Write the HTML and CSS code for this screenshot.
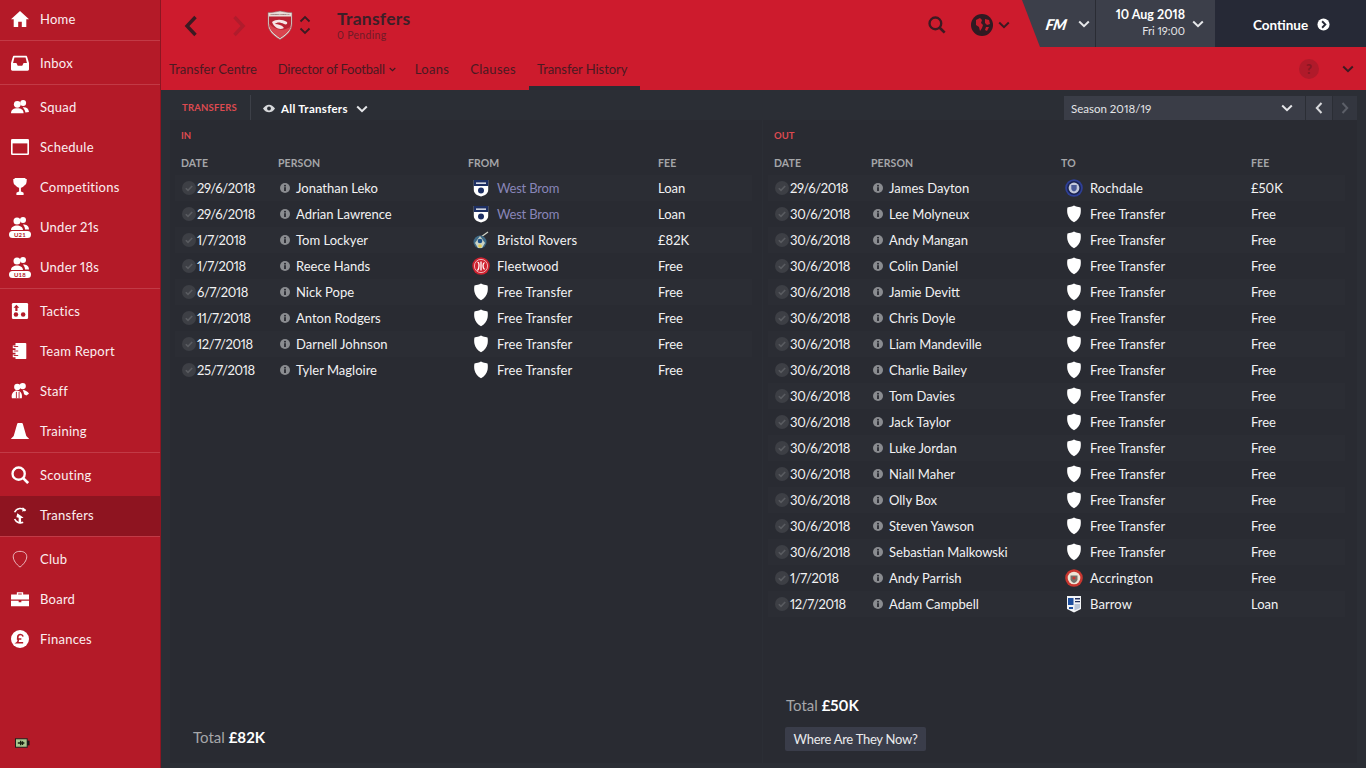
FILE: index.html
```html
<!DOCTYPE html>
<html lang="en">
<head>
<meta charset="utf-8">
<title>Transfers</title>
<link rel="stylesheet" href="styles.css">
</head>
<body>
<svg class="defs" width="0" height="0">
  <defs>
    <symbol id="check" viewBox="0 0 14 14"><circle cx="7" cy="7" r="7" fill="#3d3f45"/><path d="M3.800 7.200l2.200 2.200 4.200-4.400" fill="none" stroke="#5a5c61" stroke-width="1.600"/></symbol>
    <symbol id="info" viewBox="0 0 10 10"><circle cx="5" cy="5" r="5" fill="#8a8c90"/><rect x="4.100" y="4.200" width="1.800" height="3.800" fill="#282a31"/><rect x="4.100" y="1.900" width="1.800" height="1.600" fill="#282a31"/></symbol>
    <symbol id="shield" viewBox="0 0 16 18"><path d="M1.500 2.400C4 2.300 6 1.600 8 .6c2 1 4 1.700 6.500 1.800.5 2 .4 4.500 0 6.600-.8 3.700-3 6.500-6.500 8.200C4.500 15.500 2.300 12.700 1.500 9c-.4-2.100-.5-4.600 0-6.600z" fill="#fff"/></symbol>
    <symbol id="wba" viewBox="0 0 16 18"><path d="M.8 1h14.400v10c0 3.500-3.200 5.500-7.200 6.500C4 16.500.8 14.500.8 11z" fill="#fff"/><path d="M.8 1h14.400v6H.8z" fill="#1d2f63"/><path d="M3 3.500h10v1.300H3z" fill="#fff"/><circle cx="8" cy="11.500" r="3" fill="#1d2f63"/></symbol>
    <symbol id="bristol" viewBox="0 0 18 18"><path d="M16 1L9 6" stroke="#cfd3c8" stroke-width="1.300"/><circle cx="8" cy="11" r="6.500" fill="#3f6a86"/><path d="M3 12l5-7 5 7-3 5H6z" fill="#c9d2c4"/><circle cx="8" cy="10" r="2.300" fill="#1c4f86"/><circle cx="8" cy="15" r="1.800" fill="#e2c84e"/></symbol>
    <symbol id="fleetwood" viewBox="0 0 18 18"><circle cx="9" cy="9" r="8.700" fill="#cf2230"/><circle cx="9" cy="9" r="6.600" fill="none" stroke="#f4d5d5" stroke-width=".8"/><path d="M5.500 5.500c2-1 2 6 0 8M9 4.500v9M12.500 5.500c-2 1-2 5 0 7" fill="none" stroke="#fff" stroke-width="1.300"/></symbol>
    <symbol id="rochdale" viewBox="0 0 18 18"><circle cx="9" cy="9" r="8.800" fill="#2e3f96"/><circle cx="9" cy="9" r="7" fill="#1a2350"/><circle cx="9" cy="9" r="5.400" fill="#c2c8da"/><path d="M6.300 6h5.400v3.500c0 1.500-1.300 2.500-2.700 3-1.400-.5-2.700-1.500-2.700-3z" fill="#4a5a96"/></symbol>
    <symbol id="accrington" viewBox="0 0 18 18"><circle cx="9" cy="9" r="8.800" fill="#c9362f"/><circle cx="9" cy="9" r="6.300" fill="#eee5d6"/><path d="M5.500 6.500h7v4c0 1.600-1.700 2.800-3.500 3.500-1.800-.7-3.500-1.900-3.500-3.500z" fill="#75726b"/><circle cx="9" cy="9" r="1.600" fill="#c9362f"/></symbol>
    <symbol id="barrow" viewBox="0 0 16 18"><path d="M1 1h14v13l-7 3.500L1 14z" fill="#f2f4f6"/><path d="M2 3h5.500v7H2z" fill="#1e4f9e"/><path d="M8.500 9H14v4l-5.500 2.500z" fill="#b9c6d8"/><path d="M9 3h5v1.500H9zM9 6h5v1.200H9z" fill="#24305c"/><path d="M3 12h4v2H3z" fill="#1e4f9e"/></symbol>
    <symbol id="chev" viewBox="0 0 12 8"><path d="M1.200 1.500L6 6.200l4.800-4.700" fill="none" stroke="currentColor" stroke-width="2"/></symbol>
  </defs>
</svg>
<div class="app">
  <nav class="side">
    <div class="group first">
      <a class="item"><svg class="ico" viewBox="0 0 20 20"><path d="M10 1L0 10.200h3V19h5v-6h4v6h5v-8.800h3z" fill="#fff"/></svg><span>Home</span></a>
    </div>
    <div class="group">
      <a class="item"><svg class="ico" viewBox="0 0 20 20"><path d="M3.500 2h13c.8 0 1.200.5 1.500 1.200L20 10v7c0 1-.7 1.500-1.500 1.500h-17C.7 18.500 0 18 0 17v-7L2 3.200C2.300 2.500 2.700 2 3.500 2z" fill="#fff"/><path d="M3.800 4h12.400l1.500 6H14l-1.500 3h-5L6 10H2.300z" fill="#b41a28"/></svg><span>Inbox</span></a>
    </div>
    <div class="group">
      <a class="item"><svg class="ico" viewBox="0 0 20 20"><circle cx="7" cy="7" r="3.800" fill="#fff"/><circle cx="13.500" cy="5.500" r="3.300" fill="#fff"/><path d="M0 17c0-4 3-5.500 7-5.500s7 1.500 7 5.500z" fill="#fff"/><path d="M13 10.500c3.500-.5 6.500 1 7 5l-4 .5c-.3-2.500-1.500-4-3-5.500z" fill="#fff"/></svg><span>Squad</span></a>
      <a class="item"><svg class="ico" viewBox="0 0 20 20"><rect y="1" width="20" height="18" rx="1.500" fill="#fff"/><rect x="1.800" y="6" width="16.400" height="11.200" fill="#b41a28"/></svg><span>Schedule</span></a>
      <a class="item"><svg class="ico" viewBox="0 0 20 20"><path d="M4 0h12v1h1.500c0 4-.5 6.500-3 7.500-.8 1.200-2 2-3.500 2.300V15c1 .3 2 .8 3 1.500V19H6v-2.500c1-.7 2-1.200 3-1.500v-4.200c-1.500-.3-2.700-1.100-3.500-2.300C3 7.500 2.500 5 2.500 1H4z" fill="#fff"/></svg><span>Competitions</span></a>
      <a class="item"><svg class="ico wide" viewBox="0 0 22 22"><circle cx="8" cy="5" r="3.500" fill="#fff"/><circle cx="14" cy="4" r="3" fill="#fff"/><path d="M2 14c0-3 3-4.500 6-4.500s6 1.500 6 4.500zM14 8.500c3 0 6 1 6 5h-4c0-2-1-3.500-2-5z" fill="#fff"/><rect y="15" width="22" height="7" rx="3.500" fill="#fff"/><text x="11" y="20.700" class="u">U21</text></svg><span>Under 21s</span></a>
      <a class="item"><svg class="ico wide" viewBox="0 0 22 22"><circle cx="8" cy="5" r="3.500" fill="#fff"/><circle cx="14" cy="4" r="3" fill="#fff"/><path d="M2 14c0-3 3-4.500 6-4.500s6 1.500 6 4.500zM14 8.500c3 0 6 1 6 5h-4c0-2-1-3.500-2-5z" fill="#fff"/><rect y="15" width="22" height="7" rx="3.500" fill="#fff"/><text x="11" y="20.700" class="u">U18</text></svg><span>Under 18s</span></a>
    </div>
    <div class="group">
      <a class="item"><svg class="ico" viewBox="0 0 20 20"><rect x="1" y="1" width="18" height="18" rx="1.500" fill="#fff"/><path d="M6 3L2.800 6.500h2v3.500h2.400V6.500h2z" fill="#b41a28"/><circle cx="5.500" cy="14" r="2.500" fill="#b41a28"/><circle cx="13.500" cy="14" r="2.500" fill="#b41a28"/></svg><span>Tactics</span></a>
      <a class="item"><svg class="ico" viewBox="0 0 20 20"><path d="M5 1h11c.6 0 1 .4 1 1v16c0 .6-.4 1-1 1H5z" fill="#fff"/><path d="M2 4h5v3H2zM2 9h5v3H2zM2 14h5v3H2z" fill="#fff"/><path d="M3 5h5M3 10h5M3 15h5" stroke="#b41a28" stroke-width="1"/></svg><span>Team Report</span></a>
      <a class="item"><svg class="ico" viewBox="0 0 20 20"><circle cx="7" cy="5.500" r="3.500" fill="#fff"/><circle cx="13" cy="4.500" r="3.500" fill="#fff"/><path d="M1 18c-1-4 1-8 5-8.500 5 0 7 4 6 8.500zM13 9c3 0 6 2 7 4l-3 2-2.500-1.500c-.3-2-1-3.500-1.500-4.500z" fill="#fff"/><path d="M6 11v7M9 11v7" stroke="#b41a28" stroke-width="1"/></svg><span>Staff</span></a>
      <a class="item"><svg class="ico" viewBox="0 0 20 20"><path d="M8 1h4c.6 0 1 .4 1.100 1L17 15.500l3 3V19H0v-.5l3-3L6.900 2c.1-.6.5-1 1.100-1z" fill="#fff"/></svg><span>Training</span></a>
    </div>
    <div class="group plain">
      <a class="item"><svg class="ico" viewBox="0 0 20 20"><circle cx="8.500" cy="8.500" r="6.800" fill="none" stroke="#fff" stroke-width="2.600"/><path d="M13.500 13.500L19 19" stroke="#fff" stroke-width="3"/></svg><span>Scouting</span></a>
    </div>
    <div class="group transfer">
      <a class="item active"><svg class="ico" viewBox="0 0 20 20"><path d="M16 5.500A7 7 0 0 0 4 7M4 14.500a7 7 0 0 0 9.500 3.500" fill="none" stroke="#fff" stroke-width="1.800"/><path d="M13 1.500l4 3-4.500 2zM7 8l7 5-3 .5.500 5.500-3 .5V13L6 12.500z" fill="#fff"/></svg><span>Transfers</span></a>
    </div>
    <div class="group plain">
      <a class="item"><svg class="ico" viewBox="0 0 20 20"><path d="M10 1.500c4 0 7.500 1.800 7.500 6 0 4-3.500 8.500-7.500 11.500-4-3-7.500-7.500-7.500-11.500 0-4.200 3.500-6 7.500-6z" fill="none" stroke="#f2cdd1" stroke-width="1"/></svg><span>Club</span></a>
      <a class="item"><svg class="ico" viewBox="0 0 20 20"><path d="M6.500 5V2.500h7V5H20v5.500H0l.1-5.500zM8 5h4V4H8z" fill="#fff" fill-rule="evenodd"/><path d="M0 12h8.500v1.500h3V12H20v6H0z" fill="#fff"/></svg><span>Board</span></a>
      <a class="item"><svg class="ico" viewBox="0 0 20 20"><circle cx="10" cy="10" r="10" fill="#fff"/><path d="M13.500 7.200C13 5.800 12 5 10.500 5 8.500 5 7.500 6.300 7.500 8c0 2 .8 2.500.5 4-.2 1-.6 1.500-1.500 2.200h7M6.500 10h5" fill="none" stroke="#b41a28" stroke-width="1.800"/></svg><span>Finances</span></a>
    </div>
    <div class="battery"><svg class="batt" viewBox="0 0 16 10"><rect x="0.500" y="0.500" width="12.500" height="9" fill="#a9c78f" stroke="#1a1a1a"/><rect x="13" y="2.500" width="2.500" height="5" fill="#1a1a1a"/><path d="M3 5h7M6 2.500v5M8 3v4" stroke="#14200f" stroke-width="1.400"/></svg></div>
  </nav>

  <main class="main">
    <header class="head">
      <div class="top">
        <div class="nav-arrows">
          <svg class="arrow" viewBox="0 0 14 22"><path d="M11.500 2L3 11l8.500 9" fill="none" stroke="#3c1a22" stroke-width="3.400"/></svg>
          <svg class="arrow faded" viewBox="0 0 14 22"><path d="M2.500 2L11 11l-8.500 9" fill="none" stroke="#b01c2c" stroke-width="3.400"/></svg>
        </div>
        <svg class="crest" viewBox="0 0 26 30"><path d="M1 2.500C6 2.500 9 1.800 13 1c4 .8 7 1.500 12 1.500v11c0 7-5 12-12 16-7-4-12-9-12-16z" fill="#e9dcd8" stroke="#8a6a66" stroke-width=".6"/><path d="M2 6.500h22v7c0 6-5 10.500-11 14.400-6-3.900-11-8.400-11-14.400z" fill="#b92232"/><path d="M13 27.900c-6-3.900-11-8.400-11-14.400 6 7 15 8 22 3-1.400 4.700-5.900 8.200-11 11.400z" fill="#d9434e"/><path d="M5 12c4-3 10-3 15 0 1 2-1 3-3 2-4-2-7-2-9 0 3 0 7 1 9 4-4 2-9 1-12-6z" fill="#f6e6e6"/><text x="13" y="5.300" class="crest-t">MORECAMBE FC</text></svg>
        <div class="updown">
          <svg viewBox="0 0 12 8"><path d="M1.500 6.500L6 2l4.500 4.500" fill="none" stroke="#3c1a22" stroke-width="1.800"/></svg>
          <svg viewBox="0 0 12 8"><path d="M1.500 1.500L6 6l4.500-4.500" fill="none" stroke="#3c1a22" stroke-width="1.800"/></svg>
        </div>
        <div class="title">
          <h1>Transfers</h1>
          <p>0 Pending</p>
        </div>
        <svg class="search" viewBox="0 0 20 20"><circle cx="8.200" cy="8.200" r="6.500" fill="none" stroke="#3c1a22" stroke-width="2.600"/><path d="M13 13l5.500 5.500" stroke="#3c1a22" stroke-width="3"/></svg>
        <svg class="globe" viewBox="0 0 22 22"><circle cx="11" cy="11" r="11" fill="#301a22"/><path d="M5 6l4-2 2 2-1 3 2 2-1 3-2 3-1-4-3-2zM14 5l4 1 1 4-3 1-2-2zM15 13l3 0-2 4-2-1z" fill="#c41c2c"/></svg>
        <svg class="chev globe-chev"><use href="#chev"/></svg>
        <div class="fm">
          <span class="fm-logo">FM</span>
          <svg class="chev light"><use href="#chev"/></svg>
        </div>
        <div class="date">
          <div class="date-t"><b>10 Aug 2018</b><span>Fri 19:00</span></div>
          <svg class="chev light"><use href="#chev"/></svg>
        </div>
        <div class="continue">
          <span>Continue</span>
          <svg class="cont-ico" viewBox="0 0 14 14"><circle cx="7" cy="7" r="6.500" fill="#fff"/><path d="M5.500 3.500L9 7l-3.500 3.500" fill="none" stroke="#262936" stroke-width="2"/></svg>
        </div>
      </div>
      <div class="tabs">
        <a class="tab">Transfer Centre</a>
        <a class="tab drop">Director of Football <svg class="chev tiny"><use href="#chev"/></svg></a>
        <a class="tab wider">Loans</a>
        <a class="tab wider">Clauses</a>
        <a class="tab current">Transfer History</a>
        <span class="help">?</span>
        <svg class="chev tab-chev"><use href="#chev"/></svg>
      </div>
    </header>

    <div class="toolbar">
      <span class="crumb">TRANSFERS</span>
      <span class="filter">
        <svg class="eye" viewBox="0 0 14 10"><path d="M0 5c2-3 4.500-4.500 7-4.500S12 2 14 5c-2 3-4.500 4.500-7 4.500S2 8 0 5z" fill="#d8d9dc"/><circle cx="7" cy="5" r="2.200" fill="#2b2e35"/></svg>
        <b>All Transfers</b>
        <svg class="chev light"><use href="#chev"/></svg>
      </span>
      <div class="season">
        <span>Season 2018/19</span>
        <svg class="chev light"><use href="#chev"/></svg>
      </div>
      <span class="pager"><svg viewBox="0 0 8 12"><path d="M6.500 1L1.800 6l4.700 5" fill="none" stroke="#d8d9dc" stroke-width="2"/></svg></span>
      <span class="pager"><svg viewBox="0 0 8 12"><path d="M1.500 1l4.700 5-4.700 5" fill="none" stroke="#5c5f68" stroke-width="2"/></svg></span>
    </div>

    <div class="panels">
      <section class="panel">
        <h2>IN</h2>
        <div class="row heads"><span>DATE</span><span>PERSON</span><span>FROM</span><span>FEE</span></div>
        <div class="row"><span class="d"><svg class="ck"><use href="#check"/></svg>29/6/2018</span><span class="p"><svg class="in"><use href="#info"/></svg>Jonathan Leko</span><span class="c link"><svg class="bd"><use href="#wba"/></svg>West Brom</span><span>Loan</span></div>
        <div class="row"><span class="d"><svg class="ck"><use href="#check"/></svg>29/6/2018</span><span class="p"><svg class="in"><use href="#info"/></svg>Adrian Lawrence</span><span class="c link"><svg class="bd"><use href="#wba"/></svg>West Brom</span><span>Loan</span></div>
        <div class="row"><span class="d"><svg class="ck"><use href="#check"/></svg>1/7/2018</span><span class="p"><svg class="in"><use href="#info"/></svg>Tom Lockyer</span><span class="c"><svg class="bd"><use href="#bristol"/></svg>Bristol Rovers</span><span>£82K</span></div>
        <div class="row"><span class="d"><svg class="ck"><use href="#check"/></svg>1/7/2018</span><span class="p"><svg class="in"><use href="#info"/></svg>Reece Hands</span><span class="c"><svg class="bd"><use href="#fleetwood"/></svg>Fleetwood</span><span>Free</span></div>
        <div class="row"><span class="d"><svg class="ck"><use href="#check"/></svg>6/7/2018</span><span class="p"><svg class="in"><use href="#info"/></svg>Nick Pope</span><span class="c"><svg class="bd"><use href="#shield"/></svg>Free Transfer</span><span>Free</span></div>
        <div class="row"><span class="d"><svg class="ck"><use href="#check"/></svg>11/7/2018</span><span class="p"><svg class="in"><use href="#info"/></svg>Anton Rodgers</span><span class="c"><svg class="bd"><use href="#shield"/></svg>Free Transfer</span><span>Free</span></div>
        <div class="row"><span class="d"><svg class="ck"><use href="#check"/></svg>12/7/2018</span><span class="p"><svg class="in"><use href="#info"/></svg>Darnell Johnson</span><span class="c"><svg class="bd"><use href="#shield"/></svg>Free Transfer</span><span>Free</span></div>
        <div class="row"><span class="d"><svg class="ck"><use href="#check"/></svg>25/7/2018</span><span class="p"><svg class="in"><use href="#info"/></svg>Tyler Magloire</span><span class="c"><svg class="bd"><use href="#shield"/></svg>Free Transfer</span><span>Free</span></div>
        <div class="foot left-foot"><p class="total">Total <b>£82K</b></p></div>
      </section>
      <section class="panel out">
        <h2>OUT</h2>
        <div class="row heads"><span>DATE</span><span>PERSON</span><span>TO</span><span>FEE</span></div>
        <div class="row"><span class="d"><svg class="ck"><use href="#check"/></svg>29/6/2018</span><span class="p"><svg class="in"><use href="#info"/></svg>James Dayton</span><span class="c"><svg class="bd"><use href="#rochdale"/></svg>Rochdale</span><span>£50K</span></div>
        <div class="row"><span class="d"><svg class="ck"><use href="#check"/></svg>30/6/2018</span><span class="p"><svg class="in"><use href="#info"/></svg>Lee Molyneux</span><span class="c"><svg class="bd"><use href="#shield"/></svg>Free Transfer</span><span>Free</span></div>
        <div class="row"><span class="d"><svg class="ck"><use href="#check"/></svg>30/6/2018</span><span class="p"><svg class="in"><use href="#info"/></svg>Andy Mangan</span><span class="c"><svg class="bd"><use href="#shield"/></svg>Free Transfer</span><span>Free</span></div>
        <div class="row"><span class="d"><svg class="ck"><use href="#check"/></svg>30/6/2018</span><span class="p"><svg class="in"><use href="#info"/></svg>Colin Daniel</span><span class="c"><svg class="bd"><use href="#shield"/></svg>Free Transfer</span><span>Free</span></div>
        <div class="row"><span class="d"><svg class="ck"><use href="#check"/></svg>30/6/2018</span><span class="p"><svg class="in"><use href="#info"/></svg>Jamie Devitt</span><span class="c"><svg class="bd"><use href="#shield"/></svg>Free Transfer</span><span>Free</span></div>
        <div class="row"><span class="d"><svg class="ck"><use href="#check"/></svg>30/6/2018</span><span class="p"><svg class="in"><use href="#info"/></svg>Chris Doyle</span><span class="c"><svg class="bd"><use href="#shield"/></svg>Free Transfer</span><span>Free</span></div>
        <div class="row"><span class="d"><svg class="ck"><use href="#check"/></svg>30/6/2018</span><span class="p"><svg class="in"><use href="#info"/></svg>Liam Mandeville</span><span class="c"><svg class="bd"><use href="#shield"/></svg>Free Transfer</span><span>Free</span></div>
        <div class="row"><span class="d"><svg class="ck"><use href="#check"/></svg>30/6/2018</span><span class="p"><svg class="in"><use href="#info"/></svg>Charlie Bailey</span><span class="c"><svg class="bd"><use href="#shield"/></svg>Free Transfer</span><span>Free</span></div>
        <div class="row"><span class="d"><svg class="ck"><use href="#check"/></svg>30/6/2018</span><span class="p"><svg class="in"><use href="#info"/></svg>Tom Davies</span><span class="c"><svg class="bd"><use href="#shield"/></svg>Free Transfer</span><span>Free</span></div>
        <div class="row"><span class="d"><svg class="ck"><use href="#check"/></svg>30/6/2018</span><span class="p"><svg class="in"><use href="#info"/></svg>Jack Taylor</span><span class="c"><svg class="bd"><use href="#shield"/></svg>Free Transfer</span><span>Free</span></div>
        <div class="row"><span class="d"><svg class="ck"><use href="#check"/></svg>30/6/2018</span><span class="p"><svg class="in"><use href="#info"/></svg>Luke Jordan</span><span class="c"><svg class="bd"><use href="#shield"/></svg>Free Transfer</span><span>Free</span></div>
        <div class="row"><span class="d"><svg class="ck"><use href="#check"/></svg>30/6/2018</span><span class="p"><svg class="in"><use href="#info"/></svg>Niall Maher</span><span class="c"><svg class="bd"><use href="#shield"/></svg>Free Transfer</span><span>Free</span></div>
        <div class="row"><span class="d"><svg class="ck"><use href="#check"/></svg>30/6/2018</span><span class="p"><svg class="in"><use href="#info"/></svg>Olly Box</span><span class="c"><svg class="bd"><use href="#shield"/></svg>Free Transfer</span><span>Free</span></div>
        <div class="row"><span class="d"><svg class="ck"><use href="#check"/></svg>30/6/2018</span><span class="p"><svg class="in"><use href="#info"/></svg>Steven Yawson</span><span class="c"><svg class="bd"><use href="#shield"/></svg>Free Transfer</span><span>Free</span></div>
        <div class="row"><span class="d"><svg class="ck"><use href="#check"/></svg>30/6/2018</span><span class="p"><svg class="in"><use href="#info"/></svg>Sebastian Malkowski</span><span class="c"><svg class="bd"><use href="#shield"/></svg>Free Transfer</span><span>Free</span></div>
        <div class="row"><span class="d"><svg class="ck"><use href="#check"/></svg>1/7/2018</span><span class="p"><svg class="in"><use href="#info"/></svg>Andy Parrish</span><span class="c"><svg class="bd"><use href="#accrington"/></svg>Accrington</span><span>Free</span></div>
        <div class="row"><span class="d"><svg class="ck"><use href="#check"/></svg>12/7/2018</span><span class="p"><svg class="in"><use href="#info"/></svg>Adam Campbell</span><span class="c"><svg class="bd"><use href="#barrow"/></svg>Barrow</span><span>Loan</span></div>
        <div class="foot"><p class="total">Total <b>£50K</b></p><button class="btn">Where Are They Now?</button></div>
      </section>
    </div>
  </main>
</div>
</body>
</html>
```

FILE: styles.css
```css
* { box-sizing: border-box; }
html, body { margin: 0; height: 100%; overflow: hidden; }
body { font-family: Lato, "Open Sans", sans-serif; font-size: 13px; color: #fff; background: #2b2e35; font-variant-numeric: proportional-nums; }
.defs { position: absolute; }
.app { display: flex; width: 1366px; height: 768px; }

/* sidebar */
.side { width: 161px; flex: none; background: #b41a28; border-right: 1px solid #8c1622; display: flex; flex-direction: column; }
.group { padding: 2px 0 1px; border-bottom: 1px solid #c23a46; }
.group.first { padding-top: 0; }
.group.first .item { height: 39px; padding-bottom: 1px; }
.group.plain { border-bottom: 0; padding-bottom: 0; }
.group.transfer { padding: 1px 0 0; }
.item { display: flex; align-items: center; height: 40px; padding-left: 11px; font-size: 13px; letter-spacing: .25px; color: #fbeef0; }
.item.active { background: #8e1420; padding-bottom: 2px; }
.ico { width: 18px; height: 18px; margin-right: 11px; flex: none; }
.ico.wide { width: 22px; height: 22px; margin-left: -2px; margin-right: 9px; }
.u { font: 700 6px Lato, sans-serif; text-anchor: middle; fill: #b41a28; }
.battery { margin-top: auto; padding: 0 0 20px 15px; display: flex; }
.batt { width: 15px; height: 10px; }

/* header */
.main { flex: 1; min-width: 0; display: flex; flex-direction: column; }
.head { background: #cd1b2d; height: 90px; flex: none; }
.top { display: flex; align-items: flex-start; height: 48px; }
.nav-arrows { display: flex; gap: 34px; padding: 15px 0 0 23px; }
.arrow { width: 14px; height: 22px; }
.crest { width: 26px; height: 30px; margin: 10px 0 0 21px; }
.crest-t { font: 700 2.400px Lato, sans-serif; text-anchor: middle; fill: #6d4240; }
.updown { display: flex; flex-direction: column; gap: 4px; margin: 15px 0 0 6px; }
.updown svg { width: 12px; height: 8px; display: block; }
.title { margin: 9px 0 0 26px; }
.title h1 { margin: 0; font-size: 17.500px; line-height: 20px; font-weight: 700; letter-spacing: .25px; color: #3c1f28; }
.title p { margin: 0; font-size: 10.500px; line-height: 13px; letter-spacing: .3px; color: #701c28; }
.search { width: 18px; height: 18px; margin: 16px 0 0 auto; }
.globe { width: 22px; height: 22px; margin: 14px 0 0 25px; }
.chev { width: 12px; height: 8px; display: block; color: #3c1a22; }
.chev.light { color: #e6e7ea; }
.globe-chev { margin: 21px 0 0 5px; }
.fm { width: 73px; height: 47px; margin-left: 12px; background: #3c3f4a; clip-path: polygon(0 0, 100% 0, 100% 100%, 18px 100%); display: flex; align-items: center; padding-left: 24px; gap: 11px; }
.fm-logo { font: italic 900 15px Lato, sans-serif; letter-spacing: -.3px; color: #fff; transform: skewX(-10deg); }
.date { width: 120px; height: 47px; background: #3c3f4a; border-left: 1px solid #2a2c34; display: flex; align-items: center; padding-right: 11px; justify-content: flex-end; gap: 7px; }
.date-t { display: flex; flex-direction: column; align-items: flex-end; }
.date-t b { font-size: 12.500px; line-height: 16px; font-weight: 700; margin-top: -2px; }
.date-t span { font-size: 11px; line-height: 16px; color: #e4e5e8; }
.continue { width: 151px; height: 47px; background: #262936; display: flex; align-items: center; padding: 2px 0 0 38px; gap: 9px; font-weight: 700; font-size: 13.500px; }
.cont-ico { width: 13px; height: 13px; }
.tabs { display: flex; align-items: stretch; height: 42px; }
.tab { display: flex; align-items: center; gap: 4px; padding: 4px 13px 0 8px; height: 42px; font-size: 13px; color: #4a1a22; border-bottom: 4px solid transparent; }
.tab.drop { letter-spacing: -.2px; padding-right: 11px; }
.tab.wider { letter-spacing: .3px; }
.tab.current { border-bottom-color: #2a2c34; letter-spacing: -.05px; }
.chev.tiny { width: 7px; height: 5px; }
.help { width: 20px; height: 20px; border-radius: 50%; background: #b01a2a; color: #8a1622; margin: 11px 0 0 auto; font-weight: 900; font-size: 13px; line-height: 20px; text-align: center; }
.tab-chev { margin: 17px 12px 0 23px; }

/* toolbar */
.toolbar { height: 30px; flex: none; display: flex; align-items: center; padding: 0 9px 0 21px; }
.crumb { font-size: 9.500px; font-weight: 700; letter-spacing: .2px; color: #dc4a50; width: 69px; height: 25px; line-height: 26px; margin-top: 5px; border-right: 1px solid #3d4048; }
.filter { display: flex; align-items: center; gap: 6px; padding-left: 12px; font-size: 11.500px; margin-top: 7px; }
.filter b { font-weight: 700; letter-spacing: .3px; }
.eye { width: 12px; height: 9px; }
.filter .chev { margin-left: 2px; }
.season { width: 241px; height: 24px; margin: 6px 1px 0 auto; background: #3a3d47; display: flex; align-items: center; justify-content: space-between; padding: 0 12px 0 7px; font-size: 11.500px; color: #e4e5e8; }
.pager { width: 26px; height: 24px; margin: 6px 1px 0 0; background: #3a3d47; display: flex; align-items: center; justify-content: center; }
.pager:last-child { background: #33363f; margin-right: 0; width: 24px; }
.pager svg { width: 8px; height: 12px; }

/* panels */
.panels { flex: 1; min-height: 0; display: grid; grid-template-columns: 592px 594px; gap: 1px; padding: 0 0 5px 9px; }
.panel { background: #292b32; display: flex; flex-direction: column; padding: 0 10px 0 5px; min-height: 0; }
.panel.out { padding-right: 12px; }
h2 { margin: 0; padding: 10px 0 0 6px; height: 30px; font-size: 9.500px; line-height: 12px; font-weight: 700; color: #dc4a50; }
.row { display: grid; grid-template-columns: 97px 190px 190px 1fr; align-items: center; height: 26px; padding-left: 6px; font-size: 13px; color: #f2f2f3; }
.row:nth-child(odd) { background: #2b2d34; }
.row.heads { height: 25px; padding-top: 1px; font-size: 10.500px; font-weight: 700; letter-spacing: .1px; color: #a5a6a9; background: none; }
.row > span { display: flex; align-items: center; white-space: nowrap; }
.ck { width: 14px; height: 14px; margin: 0 1px 0 1px; flex: none; }
.d { letter-spacing: -.35px; }
.in { width: 10px; height: 10px; margin: 0 6px 0 2px; flex: none; }
.bd { width: 18px; height: 18px; margin: 0 7px 0 4px; flex: none; }
.c { letter-spacing: .1px; }
.link { color: #8885b8; letter-spacing: -.2px; }
.foot { margin-top: auto; padding: 0 0 12px 18px; }
.left-foot { padding-bottom: 16px; }
.total { margin: 0; font-size: 15px; line-height: 20px; color: #a5a6a9; }
.total b { color: #fff; font-weight: 700; }
.btn { display: block; margin: 12px 0 0 -1px; width: 141px; height: 24px; border: 0; border-radius: 2px; background: #3a3d4a; color: #ebebed; font: 13px Lato, sans-serif; letter-spacing: -.27px; padding: 0; }
```
